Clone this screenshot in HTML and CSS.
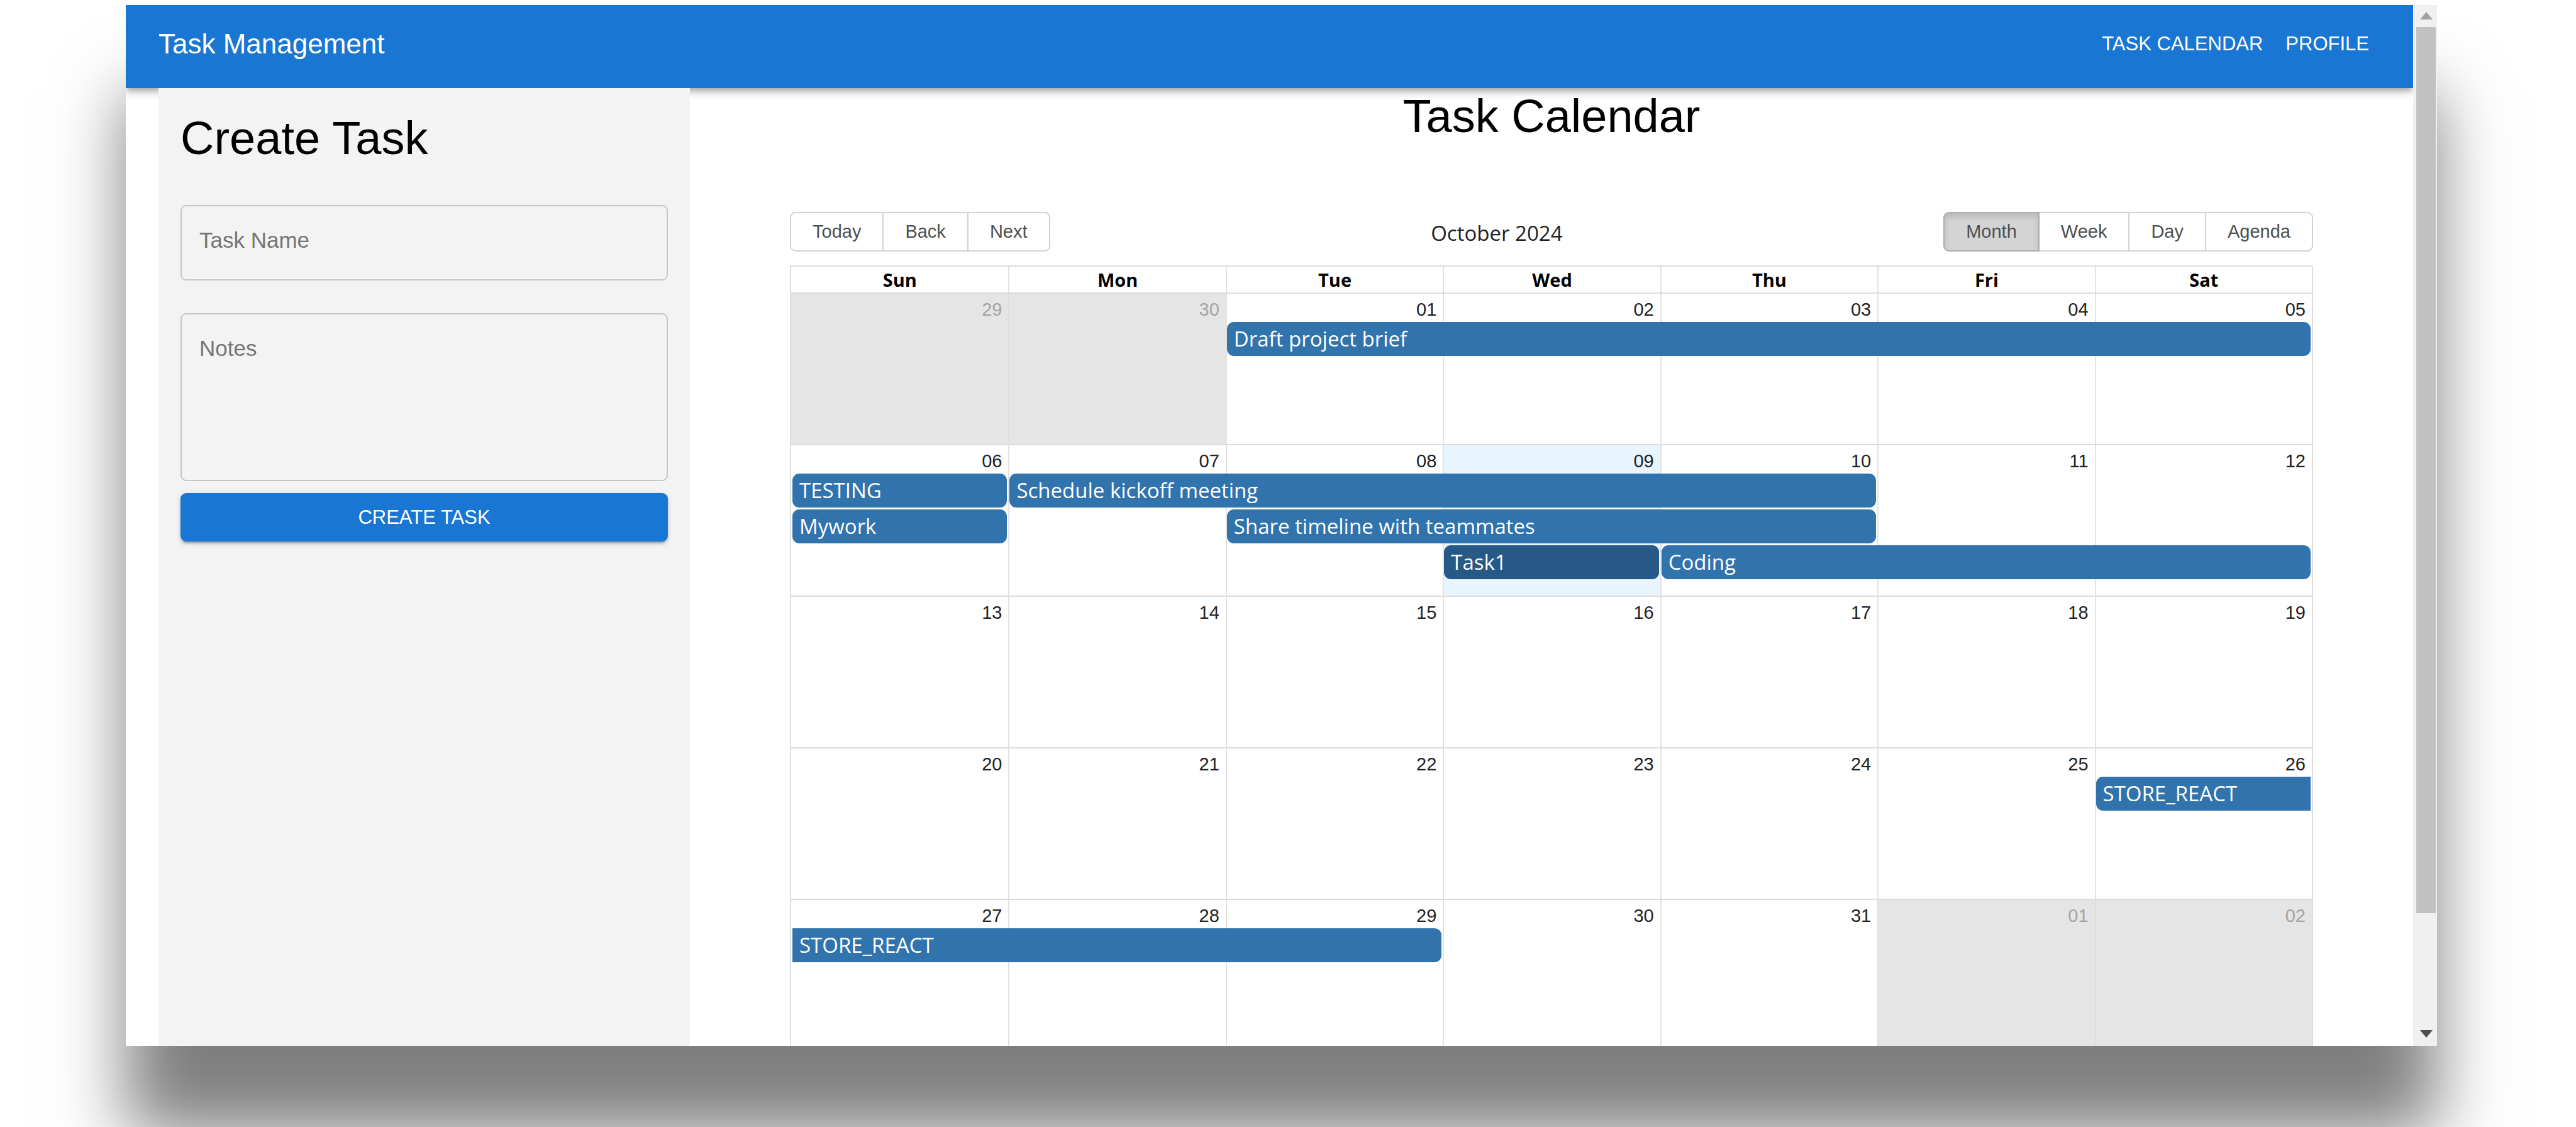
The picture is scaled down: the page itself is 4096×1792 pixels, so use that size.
FILE: index.html
```html
<!DOCTYPE html>
<html lang="en">
<head>
<meta charset="utf-8">
<meta name="viewport" content="width=device-width, initial-scale=1">
<title>Task Management</title>
<link rel="stylesheet" href="styles.css">
</head>
<body>
<div class="window">
  <div class="page">
    <header class="appbar">
      <a class="brand" href="#">Task Management</a>
      <nav class="nav">
        <a class="nav-link" href="#calendar">TASK CALENDAR</a>
        <a class="nav-link" href="#profile">PROFILE</a>
      </nav>
    </header>
    <div class="content">
      <aside class="sidebar">
        <h1 class="title">Create Task</h1>
        <form class="task-form">
          <div class="field">
            <label class="field-label" for="task-name">Task Name</label>
            <input class="field-input" id="task-name" type="text">
          </div>
          <div class="field field-notes">
            <label class="field-label" for="task-notes">Notes</label>
            <textarea class="field-input" id="task-notes"></textarea>
          </div>
          <button class="submit" type="button">CREATE TASK</button>
        </form>
      </aside>
      <main class="main" id="calendar">
        <h2 class="title title-center">Task Calendar</h2>
        <div class="toolbar">
          <div class="btn-group">
            <button class="btn" type="button">Today</button>
            <button class="btn" type="button">Back</button>
            <button class="btn" type="button">Next</button>
          </div>
          <span class="toolbar-label">October 2024</span>
          <div class="btn-group">
            <button class="btn btn-active" type="button">Month</button>
            <button class="btn" type="button">Week</button>
            <button class="btn" type="button">Day</button>
            <button class="btn" type="button">Agenda</button>
          </div>
        </div>
        <div class="month">
          <div class="weekdays">
            <span class="weekday">Sun</span>
            <span class="weekday">Mon</span>
            <span class="weekday">Tue</span>
            <span class="weekday">Wed</span>
            <span class="weekday">Thu</span>
            <span class="weekday">Fri</span>
            <span class="weekday">Sat</span>
          </div>
          <div class="week">
            <div class="day col-1 off"><button class="date" type="button">29</button></div>
            <div class="day col-2 off"><button class="date" type="button">30</button></div>
            <div class="day col-3"><button class="date" type="button">01</button></div>
            <div class="day col-4"><button class="date" type="button">02</button></div>
            <div class="day col-5"><button class="date" type="button">03</button></div>
            <div class="day col-6"><button class="date" type="button">04</button></div>
            <div class="day col-7"><button class="date" type="button">05</button></div>
            <button class="event line-1 col-3 span-5" type="button">Draft project brief</button>
          </div>
          <div class="week">
            <div class="day col-1"><button class="date" type="button">06</button></div>
            <div class="day col-2"><button class="date" type="button">07</button></div>
            <div class="day col-3"><button class="date" type="button">08</button></div>
            <div class="day col-4 today"><button class="date" type="button">09</button></div>
            <div class="day col-5"><button class="date" type="button">10</button></div>
            <div class="day col-6"><button class="date" type="button">11</button></div>
            <div class="day col-7"><button class="date" type="button">12</button></div>
            <button class="event line-1 col-1" type="button">TESTING</button>
            <button class="event line-1 col-2 span-4" type="button">Schedule kickoff meeting</button>
            <button class="event line-2 col-1" type="button">Mywork</button>
            <button class="event line-2 col-3 span-3" type="button">Share timeline with teammates</button>
            <button class="event line-3 col-4 selected" type="button">Task1</button>
            <button class="event line-3 col-5 span-3" type="button">Coding</button>
          </div>
          <div class="week">
            <div class="day col-1"><button class="date" type="button">13</button></div>
            <div class="day col-2"><button class="date" type="button">14</button></div>
            <div class="day col-3"><button class="date" type="button">15</button></div>
            <div class="day col-4"><button class="date" type="button">16</button></div>
            <div class="day col-5"><button class="date" type="button">17</button></div>
            <div class="day col-6"><button class="date" type="button">18</button></div>
            <div class="day col-7"><button class="date" type="button">19</button></div>
          </div>
          <div class="week">
            <div class="day col-1"><button class="date" type="button">20</button></div>
            <div class="day col-2"><button class="date" type="button">21</button></div>
            <div class="day col-3"><button class="date" type="button">22</button></div>
            <div class="day col-4"><button class="date" type="button">23</button></div>
            <div class="day col-5"><button class="date" type="button">24</button></div>
            <div class="day col-6"><button class="date" type="button">25</button></div>
            <div class="day col-7"><button class="date" type="button">26</button></div>
            <button class="event line-1 col-7 continues-after" type="button">STORE_REACT</button>
          </div>
          <div class="week">
            <div class="day col-1"><button class="date" type="button">27</button></div>
            <div class="day col-2"><button class="date" type="button">28</button></div>
            <div class="day col-3"><button class="date" type="button">29</button></div>
            <div class="day col-4"><button class="date" type="button">30</button></div>
            <div class="day col-5"><button class="date" type="button">31</button></div>
            <div class="day col-6 off"><button class="date" type="button">01</button></div>
            <div class="day col-7 off"><button class="date" type="button">02</button></div>
            <button class="event line-1 col-1 span-3 continues-prior" type="button">STORE_REACT</button>
          </div>
        </div>
      </main>
    </div>
  </div>
  <div class="scrollbar" aria-hidden="true">
    <svg class="arrow arrow-up" viewBox="0 0 20 12"><path d="M0 12 L10 0 L20 12 Z"/></svg>
    <div class="scroll-track"><div class="scroll-thumb"></div></div>
    <svg class="arrow arrow-down" viewBox="0 0 20 12"><path d="M0 0 L20 0 L10 12 Z"/></svg>
  </div>
</div>
</body>
</html>
```
FILE: styles.css
```css
* {
  box-sizing: border-box;
}

body {
  margin: 0;
  height: 100vh;
  overflow: hidden;
  padding: 8px 221px 129px 200px;
  background: #fff;
  color: #000;
  font-family: "Liberation Sans", Arial, sans-serif;
}

button,
input,
textarea {
  font-family: inherit;
  margin: 0;
}

.window {
  display: flex;
  height: 100%;
  background: #fff;
  box-shadow: 0 140px 104px rgba(0, 0, 0, 0.5);
}

.page {
  display: flex;
  flex: 1;
  flex-direction: column;
  min-width: 0;
  overflow: hidden;
}

/* App bar */
.appbar {
  display: flex;
  flex: none;
  align-items: center;
  justify-content: space-between;
  height: 132px;
  padding: 0 70px 8px 52px;
  background: #1976d2;
  color: #fff;
  box-shadow: 0 4px 8px -2px rgba(0, 0, 0, 0.2), 0 8px 10px rgba(0, 0, 0, 0.14), 0 2px 20px rgba(0, 0, 0, 0.12);
}

.brand,
.nav-link {
  color: inherit;
  text-decoration: none;
}

.brand {
  font-size: 44px;
  line-height: 70px;
}

.nav {
  display: flex;
  gap: 36px;
}

.nav-link {
  font-size: 31px;
  line-height: 54px;
}

/* Create form */
.content {
  display: flex;
  flex: 1;
  min-height: 0;
  padding-left: 52px;
}

.sidebar {
  flex: none;
  width: 845px;
  padding: 35px;
  background: #f3f3f3;
}

.title {
  margin: 0;
  font-size: 74px;
  line-height: 90px;
  font-weight: 400;
}

.title-center {
  text-align: center;
}

.task-form {
  display: flex;
  flex-direction: column;
  margin-top: 61px;
}

.field {
  display: grid;
  height: 120px;
  margin-bottom: 52px;
}

.field-notes {
  height: 267px;
  margin-bottom: 19px;
}

.field-label {
  grid-area: 1 / 1;
  padding: 34px 30px;
  color: #757575;
  font-size: 35px;
  line-height: 44px;
  pointer-events: none;
}

.field-input {
  grid-area: 1 / 1;
  width: 100%;
  height: 100%;
  padding: 34px 28px;
  border: 2px solid #c6c6c6;
  border-radius: 9px;
  background: transparent;
  font-size: 35px;
  line-height: 44px;
  resize: none;
}

.submit {
  height: 77px;
  padding: 0;
  border: 0;
  border-radius: 9px;
  background: #1976d2;
  color: #fff;
  font-size: 31px;
  box-shadow: 0 6px 2px -4px rgba(0, 0, 0, 0.2), 0 4px 4px rgba(0, 0, 0, 0.14), 0 2px 10px rgba(0, 0, 0, 0.12);
}

/* Calendar */
.main {
  flex: 1;
  min-width: 0;
  padding: 0 159px;
}

.toolbar {
  display: flex;
  align-items: center;
  margin: 107px 0 22px;
}

.toolbar-label {
  flex: 1;
  padding-top: 4px;
  color: #222;
  font-family: "Open Sans", "Noto Sans", sans-serif;
  font-size: 33px;
  line-height: 46px;
  text-align: center;
}

.btn-group {
  display: flex;
}

.btn {
  height: 63px;
  margin-left: -2px;
  padding: 0 34px;
  border: 2px solid #d2d2d2;
  background: #fff;
  color: #4c4f51;
  font-size: 29px;
}

.btn:first-child {
  margin-left: 0;
  border-radius: 9px 0 0 9px;
}

.btn:last-child {
  border-radius: 0 9px 9px 0;
}

.btn-active {
  z-index: 1;
  border-color: #adadad;
  background: #d4d4d4;
  box-shadow: inset 0 6px 10px rgba(0, 0, 0, 0.12);
}

.month {
  border: 2px solid #ddd;
  font-family: "Open Sans", "Noto Sans", sans-serif;
}

.weekdays {
  display: grid;
  grid-template-columns: repeat(7, 1fr);
}

.weekday {
  border-left: 2px solid #e2e2e2;
  font-size: 29px;
  font-weight: 700;
  line-height: 41px;
  text-align: center;
}

.weekday:first-child {
  border-left: 0;
}

.week {
  display: grid;
  grid-template-columns: repeat(7, 1fr);
  grid-template-rows: 42px repeat(3, 54px) 1fr;
  row-gap: 3px;
  height: 241px;
  border-top: 2px solid #ddd;
}

.day {
  grid-row: 1 / -1;
  padding: 9px 10px 0 0;
  border-left: 2px solid #e2e2e2;
  text-align: right;
}

.day.col-1 {
  border-left: 0;
}

.off {
  border-color: #dedede;
  background: #e5e5e5;
}

.today {
  background: #e8f4fe;
}

.date {
  display: block;
  margin-left: auto;
  padding: 0;
  border: 0;
  background: none;
  color: #222;
  font-family: "Liberation Sans", Arial, sans-serif;
  font-size: 29px;
  line-height: 32px;
}

.off .date {
  color: #a3a3a3;
}

.event {
  min-width: 0;
  margin: 0 2px;
  padding: 0 11px;
  border: 0;
  border-radius: 11px;
  background: #3174ad;
  color: #fff;
  font-family: inherit;
  font-size: 33px;
  line-height: 54px;
  text-align: left;
  white-space: nowrap;
}

.selected {
  background: #265985;
}

.continues-after {
  border-radius: 11px 0 0 11px;
}

.continues-prior {
  border-radius: 0 11px 11px 0;
}

.line-1 { grid-row: 2; }
.line-2 { grid-row: 3; }
.line-3 { grid-row: 4; }

.col-1 { grid-column-start: 1; }
.col-2 { grid-column-start: 2; }
.col-3 { grid-column-start: 3; }
.col-4 { grid-column-start: 4; }
.col-5 { grid-column-start: 5; }
.col-6 { grid-column-start: 6; }
.col-7 { grid-column-start: 7; }

.span-3 { grid-column-end: span 3; }
.span-4 { grid-column-end: span 4; }
.span-5 { grid-column-end: span 5; }

/* Scrollbar */
.scrollbar {
  display: flex;
  flex: none;
  flex-direction: column;
  align-items: center;
  width: 38px;
  padding: 11px 2px 13px 5px;
  background: #f0f0f0;
}

.arrow {
  flex: none;
  width: 20px;
  height: 12px;
}

.arrow-up {
  fill: #a3a3a3;
}

.arrow-down {
  fill: #505050;
}

.scroll-track {
  flex: 1;
  align-self: stretch;
  padding: 12px 0;
}

.scroll-thumb {
  height: 89%;
  background: #c1c1c1;
}
```
